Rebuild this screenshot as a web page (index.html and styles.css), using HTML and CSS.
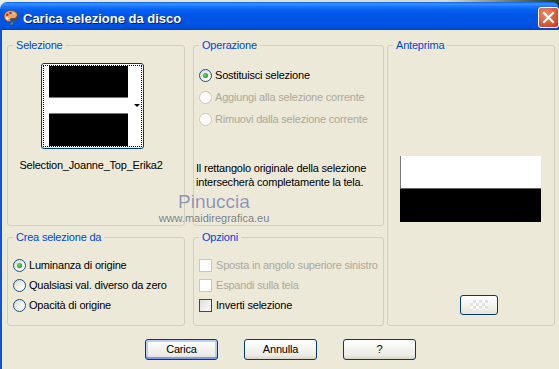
FILE: index.html
```html
<!DOCTYPE html>
<html lang="it">
  <head>
    <meta charset="UTF-8" />
    <title>Carica selezione da disco</title>
    <link rel="stylesheet" href="styles.css">
  </head>
  <body>
    <div class="window">
      <div class="titlebar">
        <svg class="app-icon" viewBox="0 0 16 16" width="16" height="16">
          <path d="M7.5 1.5C3.8 1.5 1 4 1 7.3c0 3 2.4 5.4 5.3 5.4 1.2 0 1.5-.8 1.1-1.6-.4-.8.1-1.5 1-1.5h2.1c2.2 0 3.9-1.3 3.9-3.4 0-2.7-2.9-4.7-6.9-4.7z" fill="#eda75c" stroke="#7a3d10" stroke-width=".8"/>
          <circle cx="4.3" cy="5.8" r="1.2" fill="#d42020"/>
          <circle cx="7.4" cy="3.9" r="1.2" fill="#2050e0"/>
          <circle cx="10.8" cy="4.6" r="1.1" fill="#f2e21c"/>
          <circle cx="4.2" cy="9.3" r="1.2" fill="#ffffff"/>
          <path d="M8.5 15 L14.5 7.5" stroke="#6b4a2a" stroke-width="1.6"/>
          <path d="M8 15.5 L9.6 13.4" stroke="#2bb02b" stroke-width="2"/>
        </svg>
        <span class="title">Carica selezione da disco</span>
        <span class="close-btn">
          <svg viewBox="0 0 19 19" width="19" height="19">
            <path d="M5 5 L14 14 M14 5 L5 14" stroke="#fff" stroke-width="2.2" stroke-linecap="square"/>
          </svg>
        </span>
      </div>

      <div class="dialog">
        <div class="groups">
          <fieldset class="group g-sel">
            <legend>Selezione</legend>
            <div class="thumb">
              <div class="thumb-inner">
                <div class="thumb-img"></div>
              </div>
              <span class="thumb-arrow"></span>
            </div>
            <div class="file-name">Selection_Joanne_Top_Erika2</div>
          </fieldset>

          <fieldset class="group g-op">
            <legend>Operazione</legend>
            <div class="options op-list">
              <div class="opt"><span class="radio checked"></span>Sostituisci selezione</div>
              <div class="opt disabled"><span class="radio"></span>Aggiungi alla selezione corrente</div>
              <div class="opt disabled"><span class="radio"></span>Rimuovi dalla selezione corrente</div>
            </div>
            <p class="note">Il rettangolo originale della selezione<br>intersecherà completamente la tela.</p>
          </fieldset>

          <fieldset class="group g-prev">
            <legend>Anteprima</legend>
            <div class="preview">
              <div class="pv-white"></div>
              <div class="pv-black"></div>
            </div>
            <div class="swatch-btn"><span class="checker"></span></div>
          </fieldset>

          <fieldset class="group g-crea">
            <legend>Crea selezione da</legend>
            <div class="options small-list">
              <div class="opt"><span class="radio checked"></span>Luminanza di origine</div>
              <div class="opt"><span class="radio"></span>Qualsiasi val. diverso da zero</div>
              <div class="opt"><span class="radio"></span>Opacità di origine</div>
            </div>
          </fieldset>

          <fieldset class="group g-opt">
            <legend>Opzioni</legend>
            <div class="options small-list">
              <div class="opt disabled"><span class="check"></span>Sposta in angolo superiore sinistro</div>
              <div class="opt disabled"><span class="check"></span>Espandi sulla tela</div>
              <div class="opt"><span class="check"></span>Inverti selezione</div>
            </div>
          </fieldset>
        </div>

        <div class="buttons">
          <div class="btn default">Carica</div>
          <div class="btn">Annulla</div>
          <div class="btn">?</div>
        </div>

        <div class="watermark">
          <div class="wm-name">Pinuccia</div>
          <div class="wm-site">www.maidiregrafica.eu</div>
        </div>
      </div>
    </div>
  </body>
</html>
```

FILE: styles.css
```css
* {
  box-sizing: border-box;
}

body {
  margin: 0;
  width: 559px;
  height: 369px;
  overflow: hidden;
  background: linear-gradient(to right, #ececec, #d6d6d6 80%, #1e3a1e);
  font-family: "Liberation Sans", Arial, sans-serif;
  font-size: 11px;
  letter-spacing: -0.2px;
  color: #000;
}

.window {
  margin-top: 2px;
  width: 559px;
}

/* title bar */
.titlebar {
  display: flex;
  align-items: flex-start;
  height: 28px;
  padding-left: 3px;
  border-radius: 7px 7px 0 0;
  background: linear-gradient(#0a5ff0 0px, #3d95ff 2px, #1a7aff 4px, #0560f0 8px, #0055e6 14px, #0054e3 22px, #0050dc 26px, #003fc0 28px);
}

.app-icon {
  margin-top: 7px;
  margin-right: 4px;
}

.title {
  margin-top: 9px;
  line-height: 16px;
  font-size: 13px;
  font-weight: bold;
  letter-spacing: 0;
  color: #fff;
  text-shadow: 1px 1px #0a1883;
}

.close-btn {
  display: flex;
  margin-left: auto;
  margin-top: 5px;
  width: 21px;
  height: 21px;
  border: 1px solid #fff;
  border-radius: 3px;
  background: radial-gradient(circle at 35% 30%, #f08a68, #dc5a38 55%, #c03818);
}

/* body */
.dialog {
  position: relative;
  height: 339px;
  background: #ece9d8;
  border-left: 2px solid #0b52e4;
  padding: 9px 0 0 5px;
}

.groups {
  display: grid;
  grid-template-columns: 178px 199px 171px;
  grid-template-rows: 187px 95px;
  row-gap: 5px;
}

.group {
  margin: 0;
  padding: 0;
  min-width: 0;
  border: 1px solid #d0d0bf;
  border-radius: 3px;
}

.group legend {
  margin-left: 5px;
  padding: 0 3px;
  line-height: 12px;
  color: #0046d5;
}

.g-op,
.g-opt {
  margin-left: 8px;
}

.g-prev {
  grid-column: 3;
  grid-row: 1 / 3;
  margin-left: 3px;
}

.g-crea {
  grid-column: 1;
  grid-row: 2;
}

.g-opt {
  grid-column: 2;
  grid-row: 2;
}

/* selection thumbnail */
.thumb {
  position: relative;
  width: 103px;
  height: 86px;
  margin: 12px 0 0 33px;
  padding: 1px;
  border: 1px solid #003c74;
  border-radius: 3px;
  background: linear-gradient(#fff, #f0efe8);
}

.thumb-inner {
  height: 100%;
  padding-left: 5px;
  border: 1px dotted #000;
  background: #fff;
}

.thumb-img {
  width: 79px;
  height: 80px;
  background: linear-gradient(#000 0 31px, #777 31px 32px, #fff 32px 47px, #777 47px 48px, #000 48px);
}

.thumb-arrow {
  position: absolute;
  top: 40px;
  right: 3px;
  width: 0;
  height: 0;
  border-left: 3px solid transparent;
  border-right: 3px solid transparent;
  border-top: 3px solid #000;
}

.file-name {
  margin-top: 10px;
  padding-right: 10px;
  line-height: 13px;
  text-align: center;
}

/* radio / checkbox lists */
.options {
  padding-left: 5px;
}

.op-list {
  padding-top: 13px;
}

.op-list .opt {
  height: 22px;
}

.small-list {
  padding-top: 12px;
}

.small-list .opt {
  height: 20px;
}

.opt {
  display: flex;
  align-items: center;
  white-space: nowrap;
}

.opt.disabled {
  color: #aca899;
}

.radio {
  position: relative;
  flex: none;
  width: 13px;
  height: 13px;
  margin-right: 3px;
  border: 1px solid #1c5180;
  border-radius: 50%;
  background: linear-gradient(135deg, #d8d6cc, #f6f6f2 60%, #fff);
}

.radio.checked::after {
  content: "";
  position: absolute;
  left: 3px;
  top: 3px;
  width: 5px;
  height: 5px;
  border-radius: 50%;
  background: radial-gradient(circle at 40% 40%, #6fe06a, #24a424 60%, #178a17);
}

.disabled .radio,
.disabled .check {
  border-color: #cac8bb;
  background: #fff;
}

.check {
  flex: none;
  width: 13px;
  height: 13px;
  margin-right: 4px;
  border: 1px solid #1c5180;
  background: linear-gradient(135deg, #dcdcd7, #fff);
}

.note {
  margin: 31px 0 0 2px;
  line-height: 14px;
}

/* preview */
.preview {
  width: 141px;
  height: 66px;
  margin: 105px 0 0 12px;
}

.pv-white {
  height: 33px;
  background: #fff;
  border-left: 1px solid #7a7a7a;
  border-bottom: 1px solid #666;
}

.pv-black {
  height: 33px;
  background: #000;
}

.swatch-btn {
  display: flex;
  align-items: center;
  justify-content: center;
  width: 38px;
  height: 20px;
  margin: 73px 0 0 72px;
  border: 1px solid #003c74;
  border-radius: 3px;
  background: linear-gradient(#fff, #f3f3ef 50%, #e6e3d8);
}

.checker {
  width: 18px;
  height: 10px;
  background: conic-gradient(#e2e2e2 25%, #fafafa 0 50%, #e2e2e2 0 75%, #fafafa 0);
  background-size: 6px 6px;
}

/* buttons */
.buttons {
  display: flex;
  gap: 26px;
  margin-top: 13px;
  padding-left: 138px;
}

.btn {
  width: 73px;
  height: 21px;
  line-height: 19px;
  text-align: center;
  border: 1px solid #003c74;
  border-radius: 3px;
  background: linear-gradient(#fff, #f5f5f1 40%, #ecebe5 80%, #d8d4c8);
}

.btn.default {
  box-shadow: inset 0 -2px 0 #7d99f0, inset 0 0 0 2px #b8d0f8;
}

/* watermark over the dialog */
.watermark {
  position: absolute;
  left: 148px;
  top: 162px;
  width: 128px;
  text-align: center;
  letter-spacing: 0;
  pointer-events: none;
}

.wm-name {
  font-size: 19px;
  line-height: 20px;
  color: #9094ae;
  text-shadow: 0 0 1px #fff;
}

.wm-site {
  font-size: 11px;
  line-height: 12px;
  color: #7a7a7a;
  text-shadow: 0 0 1px #fff;
}
```
